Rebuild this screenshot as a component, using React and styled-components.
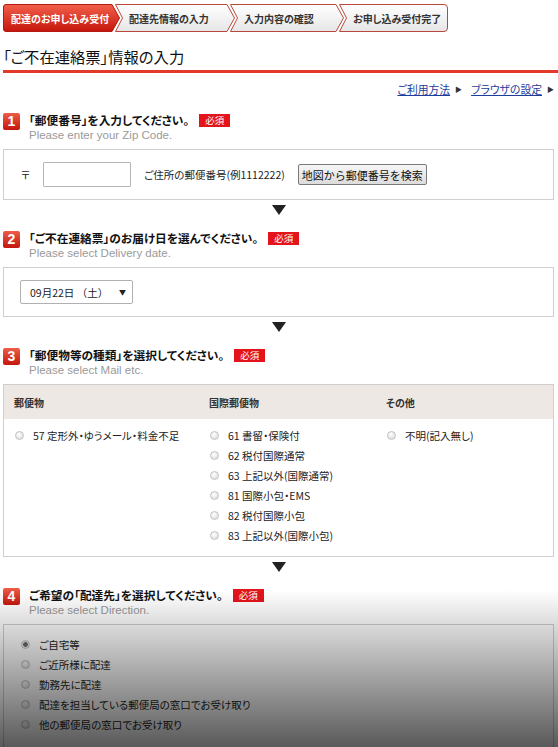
import React from 'react'
import styled, { createGlobalStyle } from 'styled-components'

const GlobalStyle = createGlobalStyle`
  body {
    margin: 0;
    background: #fff;
  }
`

const STEPS = [
  { label: '配達のお申し込み受付', w: 117 },
  { label: '配達先情報の入力', w: 120 },
  { label: '入力内容の確認', w: 114 },
  { label: 'お申し込み受付完了', w: 109 },
]

const MAIL_GROUPS = [
  { head: '郵便物', items: ['57 定形外・ゆうメール・料金不足'] },
  {
    head: '国際郵便物',
    items: [
      '61 書留・保険付',
      '62 税付国際通常',
      '63 上記以外(国際通常)',
      '81 国際小包・EMS',
      '82 税付国際小包',
      '83 上記以外(国際小包)',
    ],
  },
  { head: 'その他', items: ['不明(記入無し)'] },
]

const DIRECTIONS = [
  'ご自宅等',
  'ご近所様に配達',
  '勤務先に配達',
  '配達を担当している郵便局の窓口でお受け取り',
  '他の郵便局の窓口でお受け取り',
]

// chevron outline for one step of the progress bar
const stepPath = (w, h, i, last) => {
  const m = h / 2
  if (i === 0) {
    return `M3 .5 H${w - 8} L${w - .5} ${m} L${w - 8} ${h - .5} H3 Q.5 ${h - .5} .5 ${h - 3} V3 Q.5 .5 3 .5Z`
  }
  if (last) {
    return `M.5 .5 H${w - 4} Q${w - .5} .5 ${w - .5} 4 V${h - 4} Q${w - .5} ${h - .5} ${w - 4} ${h - .5} H.5 L7.5 ${m}Z`
  }
  return `M.5 .5 H${w - 8} L${w - .5} ${m} L${w - 8} ${h - .5} H.5 L7.5 ${m}Z`
}

const StepShape = ({ w, i, last, active }) => (
  <svg width={w} height={28} viewBox={`0 0 ${w} 28`}>
    <defs>
      <linearGradient id={`stepfill${i}`} x1="0" y1="0" x2="0" y2="1">
        {active ? (
          <>
            <stop offset="0" stopColor="#f2604a" />
            <stop offset="1" stopColor="#c5160c" />
          </>
        ) : (
          <>
            <stop offset="0" stopColor="#ffffff" />
            <stop offset="1" stopColor="#e6e6e6" />
          </>
        )}
      </linearGradient>
    </defs>
    <path
      d={stepPath(w, 28, i, last)}
      fill={`url(#stepfill${i})`}
      stroke={active ? '#b3190f' : '#b9483c'}
      strokeWidth="1"
    />
  </svg>
)

const App = () => {
  return (
    <Page>
      <GlobalStyle />
      <StepBar>
        {STEPS.map((s, i) => (
          <Step key={s.label} $w={s.w} $first={i === 0} $active={i === 0}>
            <StepShape w={s.w} i={i} last={i === STEPS.length - 1} active={i === 0} />
            <span>{s.label}</span>
          </Step>
        ))}
      </StepBar>

      <PageTitle>「ご不在連絡票」情報の入力</PageTitle>

      <HelpLinks>
        <HelpLink href="#"><span>ご利用方法</span></HelpLink>
        <HelpLink href="#"><span>ブラウザの設定</span></HelpLink>
      </HelpLinks>

      <Form>
        <Head>
          <Num>1</Num>
          <div>
            <HeadTitle>「郵便番号」を入力してください。<Required>必須</Required></HeadTitle>
            <HeadSub>Please enter your Zip Code.</HeadSub>
          </div>
        </Head>
        <Panel>
          <ZipRow>
            <span>〒</span>
            <ZipInput type="text" />
            <span>ご住所の郵便番号(例1112222)</span>
            <SearchButton type="button">地図から郵便番号を検索</SearchButton>
          </ZipRow>
        </Panel>
        <DownArrow />

        <Head>
          <Num>2</Num>
          <div>
            <HeadTitle>「ご不在連絡票」のお届け日を選んでください。<Required>必須</Required></HeadTitle>
            <HeadSub>Please select Delivery date.</HeadSub>
          </div>
        </Head>
        <Panel>
          <DateRow>
            <DateSelect>
              <span>09月22日 （土）</span>
              <Caret>▼</Caret>
            </DateSelect>
          </DateRow>
        </Panel>
        <DownArrow />

        <Head>
          <Num>3</Num>
          <div>
            <HeadTitle>「郵便物等の種類」を選択してください。<Required>必須</Required></HeadTitle>
            <HeadSub>Please select Mail etc.</HeadSub>
          </div>
        </Head>
        <Panel>
          <MailGrid>
            {MAIL_GROUPS.map(g => (
              <MailColumn key={g.head}>
                <ColHead>{g.head}</ColHead>
                <ColBody>
                  {g.items.map(item => (
                    <Choice key={item}>
                      <Radio name="mail" />
                      {item}
                    </Choice>
                  ))}
                </ColBody>
              </MailColumn>
            ))}
          </MailGrid>
        </Panel>
        <DownArrow />

        <Head>
          <Num>4</Num>
          <div>
            <HeadTitle>ご希望の「配達先」を選択してください。<Required>必須</Required></HeadTitle>
            <HeadSub>Please select Direction.</HeadSub>
          </div>
        </Head>
        <Panel>
          <DirectionList>
            {DIRECTIONS.map((d, i) => (
              <Choice key={d}>
                <Radio name="direction" defaultChecked={i === 0} />
                {d}
              </Choice>
            ))}
          </DirectionList>
        </Panel>
      </Form>

      <Shade />
    </Page>
  )
}

const Page = styled.div`
  position: relative;
  height: 747px;
  overflow: hidden;
  font-family: "Noto Sans CJK JP", "Liberation Sans", sans-serif;
  font-feature-settings: "palt";
  color: #222;
`

const StepBar = styled.nav`
  display: flex;
  padding: 4px 0 0 3px;
`

const Step = styled.div`
  position: relative;
  box-sizing: border-box;
  width: ${p => p.$w}px;
  height: 28px;
  margin-left: ${p => (p.$first ? 0 : -5)}px;
  padding-left: ${p => (p.$first ? 8 : 14)}px;
  display: flex;
  align-items: center;
  font-size: 10px;
  font-weight: bold;
  color: ${p => (p.$active ? '#fff' : '#333')};
  svg {
    position: absolute;
    left: 0;
    top: 0;
  }
  span {
    position: relative;
  }
`

const PageTitle = styled.h1`
  margin: 14px 0 0 3px;
  padding-bottom: 4px;
  border-bottom: 3px solid #e2392a;
  font-size: 15.3px;
  font-weight: normal;
  line-height: 20px;
  color: #111;
`

const HelpLinks = styled.div`
  display: flex;
  justify-content: flex-end;
  gap: 9px;
  margin: 9px 4px 0 0;
  font-size: 10.8px;
  line-height: 14px;
`

const HelpLink = styled.a`
  display: inline-flex;
  align-items: center;
  gap: 5px;
  color: #1d3c9c;
  text-decoration: none;
  span {
    text-decoration: underline;
  }
  &::after {
    content: '▶';
    font-size: 7px;
    color: #333;
  }
`

const Form = styled.div`
  margin: 17px 4px 0 3px;
`

const Head = styled.div`
  display: flex;
  align-items: flex-start;
  gap: 9px;
`

const Num = styled.span`
  width: 17px;
  height: 17px;
  border-radius: 2px;
  background: linear-gradient(#ee5d47, #c4160c);
  color: #fff;
  font: bold 14px/17px "Liberation Sans", sans-serif;
  text-align: center;
`

const HeadTitle = styled.div`
  display: flex;
  align-items: center;
  gap: 10px;
  font-size: 11.7px;
  font-weight: bold;
  line-height: 14px;
  color: #111;
`

const Required = styled.span`
  padding: 0 6px;
  background: #e3141a;
  color: #fff;
  font-size: 9.5px;
  font-weight: normal;
  line-height: 13px;
`

const HeadSub = styled.div`
  margin-top: 1px;
  font: 11.5px/14px "Liberation Sans", sans-serif;
  color: #9a9a9a;
`

const Panel = styled.div`
  margin-top: 7px;
  border: 1px solid #cfcfcf;
`

const DownArrow = styled.div`
  width: 0;
  height: 0;
  margin: 5px auto 16px;
  border-left: 7px solid transparent;
  border-right: 7px solid transparent;
  border-top: 10px solid #222;
`

const ZipRow = styled.div`
  display: flex;
  align-items: center;
  gap: 13px;
  padding: 12px 17px;
  font-size: 10.5px;
`

const ZipInput = styled.input`
  box-sizing: border-box;
  width: 88px;
  height: 25px;
  margin: 0;
  border: 1px solid #b5b5b5;
  border-radius: 1px;
`

const SearchButton = styled.button`
  height: 21px;
  padding: 0 3px;
  border: 1px solid #7a7a7a;
  border-radius: 2px;
  background: linear-gradient(#f6f6f6, #dcdcdc);
  font-family: inherit;
  font-size: 11px;
  color: #111;
`

const DateRow = styled.div`
  padding: 12px 16px;
`

const DateSelect = styled.div`
  box-sizing: border-box;
  width: 113px;
  height: 24px;
  padding: 0 6px 0 9px;
  display: flex;
  align-items: center;
  justify-content: space-between;
  border: 1px solid #b0b0b0;
  border-radius: 2px;
  font-size: 10.5px;
  font-feature-settings: normal;
`

const Caret = styled.span`
  font-size: 7px;
`

const MailGrid = styled.div`
  display: grid;
  grid-template-columns: 195px 177px 1fr;
`

const MailColumn = styled.div`
  display: flex;
  flex-direction: column;
`

const ColHead = styled.div`
  height: 34px;
  padding-left: 10px;
  display: flex;
  align-items: center;
  background: #ede8e3;
  font-size: 10px;
  font-weight: bold;
  color: #333;
`

const ColBody = styled.div`
  padding: 6px 0 11px 11px;
`

const Choice = styled.label`
  display: flex;
  align-items: center;
  gap: 9px;
  height: 20px;
  font-size: 10.5px;
  color: #222;
`

const Radio = styled.input.attrs({ type: 'radio' })`
  appearance: none;
  box-sizing: border-box;
  width: 9px;
  height: 9px;
  margin: 0;
  border: 1px solid #c2c2c2;
  border-radius: 50%;
  background: radial-gradient(circle at 40% 35%, #fff, #d6d6d6);
  &:checked {
    background: radial-gradient(circle, #6a6a6a 0 2px, #e8e8e8 2.6px);
  }
`

const DirectionList = styled.div`
  padding: 9px 0 20px 17px;
`

const Shade = styled.div`
  position: absolute;
  left: 0;
  right: 0;
  bottom: 0;
  height: 157px;
  background: linear-gradient(rgba(0, 0, 0, 0), rgba(0, 0, 0, 0.65));
  pointer-events: none;
`

export default App
